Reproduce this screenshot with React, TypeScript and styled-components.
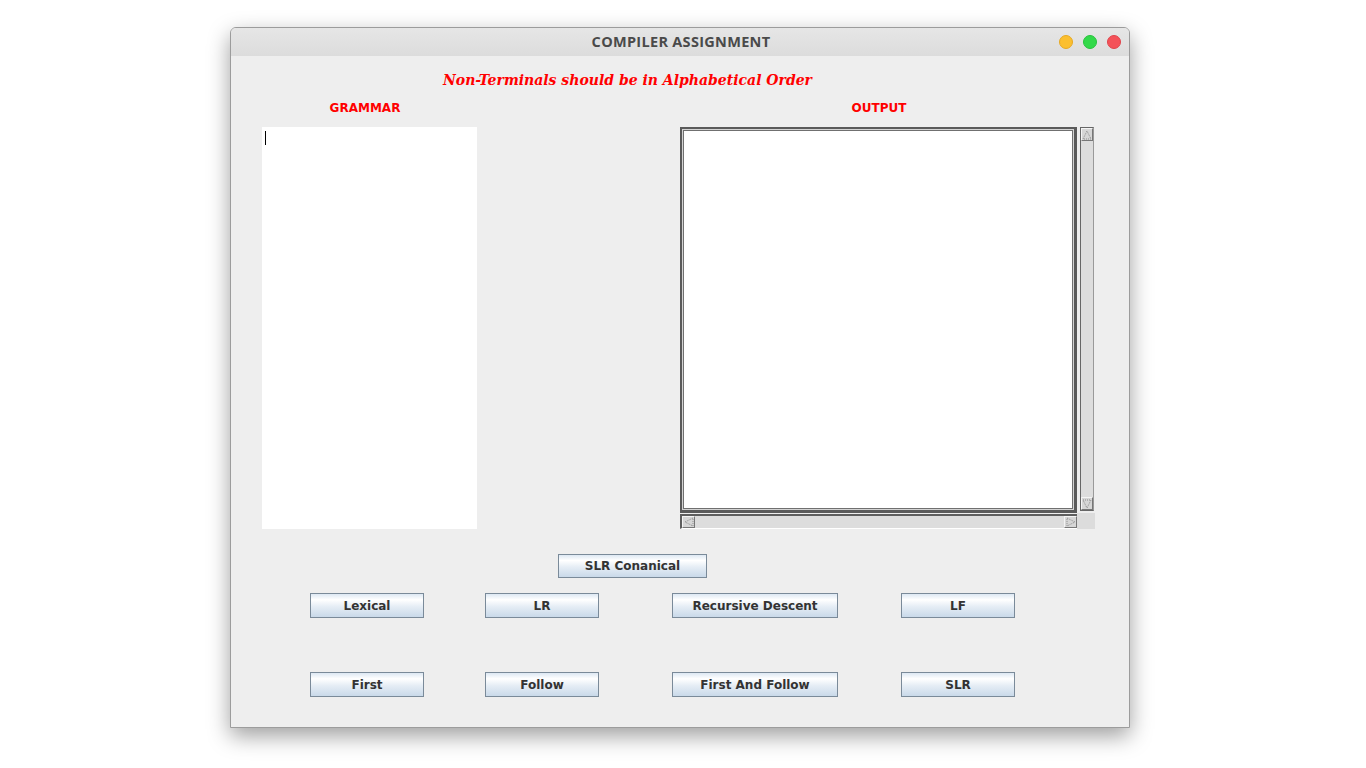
import React from 'react'
import styled, { createGlobalStyle } from 'styled-components';

const Global = createGlobalStyle`
  html, body { margin: 0; padding: 0; background: #ffffff; }
  body { width: 1366px; height: 768px; overflow: hidden; }
`;

const Window = styled.div`
  width: 900px;
  height: 701px;
  margin: 27px 0 0 230px;
  box-sizing: border-box;
  border: 1px solid #9c9c9c;
  border-radius: 6px 6px 0 0;
  background: #eeeeee;
  box-shadow: 0 8px 22px rgba(0, 0, 0, 0.38);
  display: flex;
  flex-direction: column;
  overflow: hidden;
`;

const TitleBar = styled.div`
  height: 28px;
  flex: none;
  box-sizing: border-box;
  padding-bottom: 2px;
  background: linear-gradient(#e6e6e6, #dcdcdc);
  display: grid;
  grid-template-columns: 1fr auto 1fr;
  align-items: center;
`;

const Title = styled.div`
  grid-column: 2;
  font-family: "Open Sans", "DejaVu Sans", sans-serif;
  font-weight: 700;
  font-size: 14.5px;
  letter-spacing: 0.3px;
  color: #4a4a4a;
  padding-left: 2px;
`;

const Lights = styled.div`
  grid-column: 3;
  justify-self: end;
  display: flex;
  gap: 10px;
  padding-right: 8px;
  padding-top: 1px;
`;

const Light = styled.span<{ $c: string; $b: string }>`
  width: 14px;
  height: 14px;
  border-radius: 50%;
  box-sizing: border-box;
  background: ${p => p.$c};
  border: 1px solid ${p => p.$b};
`;

const Body = styled.div`
  flex: 1;
  padding: 14px 0 0 31px;
  display: flex;
  flex-direction: column;
`;

const Notice = styled.div`
  margin-left: 181px;
  height: 20px;
  line-height: 20px;
  font-family: "DejaVu Serif", serif;
  font-style: italic;
  font-weight: 700;
  font-size: 14px;
  color: #ff0000;
`;

const Panels = styled.div`
  margin-top: 11px;
  display: grid;
  grid-template-columns: 215px 415px;
  column-gap: 203px;
  row-gap: 12px;
`;

const Label = styled.div<{ $w: number }>`
  width: ${p => p.$w}px;
  text-align: center;
  font-family: "DejaVu Sans", sans-serif;
  font-weight: 700;
  font-size: 12px;
  line-height: 14px;
  color: #ff0000;
`;

const Grammar = styled.div`
  height: 402px;
  background: #ffffff;
  padding: 4px 3px;
  box-sizing: border-box;
`;

const Caret = styled.div`
  width: 1px;
  height: 14px;
  background: #000;
`;

const OutputBox = styled.div`
  height: 402px;
  display: grid;
  grid-template-columns: 397px 18px;
  grid-template-rows: 386px 16px;
  background: #dcdcdc;
`;

const OutText = styled.div`
  background: #ffffff;
  box-sizing: border-box;
  border: 2px solid #5a5a5a;
  border-right-width: 3px;
  border-bottom-width: 3px;
  box-shadow: inset 0 0 0 1px #d4d4d4, inset 0 0 0 2px #707070;
`;

const VBar = styled.div`
  background: #eeeeee;
  padding: 0 1px 2px 3px;
  display: flex;
`;

const VTrack = styled.div`
  flex: 1;
  display: flex;
  flex-direction: column;
  justify-content: space-between;
  background: #dddddd;
  border: 1px solid #666;
  border-right-color: #999;
`;

const HBar = styled.div`
  background: #eeeeee;
  padding: 1px 0 0 0;
  display: flex;
`;

const HTrack = styled.div`
  flex: 1;
  display: flex;
  justify-content: space-between;
  background: #dddddd;
  border: 2px solid #5e5e5e;
  border-bottom-width: 1px;
  border-bottom-color: #ffffff;
  border-right-width: 0;
`;

const Arrow = styled.div<{ $vertical?: boolean }>`
  width: ${p => (p.$vertical ? '100%' : '13px')};
  height: ${p => (p.$vertical ? '13px' : '100%')};
  background: #d6d6d6;
  box-sizing: border-box;
  border: 1px solid #f4f4f4;
  border-right-color: #777;
  border-bottom-color: #777;
  display: flex;
  align-items: center;
  justify-content: center;
`;

const Buttons = styled.div`
  margin-top: 25px;
  display: flex;
  flex-direction: column;
`;

const Row = styled.div<{ $gap: number }>`
  display: flex;
  margin-top: ${p => p.$gap}px;
`;

const Btn = styled.button<{ $w: number; $left: number; $h?: number }>`
  width: ${p => p.$w}px;
  height: ${p => p.$h ?? 25}px;
  margin-left: ${p => p.$left}px;
  padding: 0;
  box-sizing: border-box;
  border: 1px solid #7a8a99;
  border-radius: 0;
  background: linear-gradient(#dde8f3 0%, #ffffff 25%, #e5edf5 55%, #c9d9e9 100%);
  font-family: "DejaVu Sans", sans-serif;
  font-weight: 700;
  font-size: 12px;
  color: #333333;
`;

const Tri = ({ dir }: { dir: 'up' | 'down' | 'left' | 'right' }) => {
  const pts = {
    up: '5,1 1,9 9,9',
    down: '1,1 9,1 5,9',
    left: '1,5 9,1 9,9',
    right: '1,1 9,5 1,9',
  }[dir];
  return (
    <svg width="10" height="10" viewBox="0 0 10 10">
      <polygon points={pts} fill="none" stroke="#8a8a8a" strokeWidth="1" strokeDasharray="1 1" />
    </svg>
  );
};

export default function App() {
  return (
    <>
      <Global />
      <Window>
        <TitleBar>
          <Title>COMPILER ASSIGNMENT</Title>
          <Lights>
            <Light $c="#fbbf2f" $b="#e6a923" />
            <Light $c="#33d94a" $b="#27c23c" />
            <Light $c="#f45259" $b="#e0444b" />
          </Lights>
        </TitleBar>
        <Body>
          <Notice>Non-Terminals should be in Alphabetical Order</Notice>
          <Panels>
            <Label $w={206}>GRAMMAR</Label>
            <Label $w={398}>OUTPUT</Label>
            <Grammar>
              <Caret />
            </Grammar>
            <OutputBox>
              <OutText />
              <VBar>
                <VTrack>
                  <Arrow $vertical><Tri dir="up" /></Arrow>
                  <Arrow $vertical><Tri dir="down" /></Arrow>
                </VTrack>
              </VBar>
              <HBar>
                <HTrack>
                  <Arrow><Tri dir="left" /></Arrow>
                  <Arrow><Tri dir="right" /></Arrow>
                </HTrack>
              </HBar>
            </OutputBox>
          </Panels>
          <Buttons>
            <Row $gap={0}>
              <Btn $w={149} $left={296} $h={24}>SLR Conanical</Btn>
            </Row>
            <Row $gap={15}>
              <Btn $w={114} $left={48}>Lexical</Btn>
              <Btn $w={114} $left={61}>LR</Btn>
              <Btn $w={166} $left={73}>Recursive Descent</Btn>
              <Btn $w={114} $left={63}>LF</Btn>
            </Row>
            <Row $gap={54}>
              <Btn $w={114} $left={48}>First</Btn>
              <Btn $w={114} $left={61}>Follow</Btn>
              <Btn $w={166} $left={73}>First And Follow</Btn>
              <Btn $w={114} $left={63}>SLR</Btn>
            </Row>
          </Buttons>
        </Body>
      </Window>
    </>
  );
}
